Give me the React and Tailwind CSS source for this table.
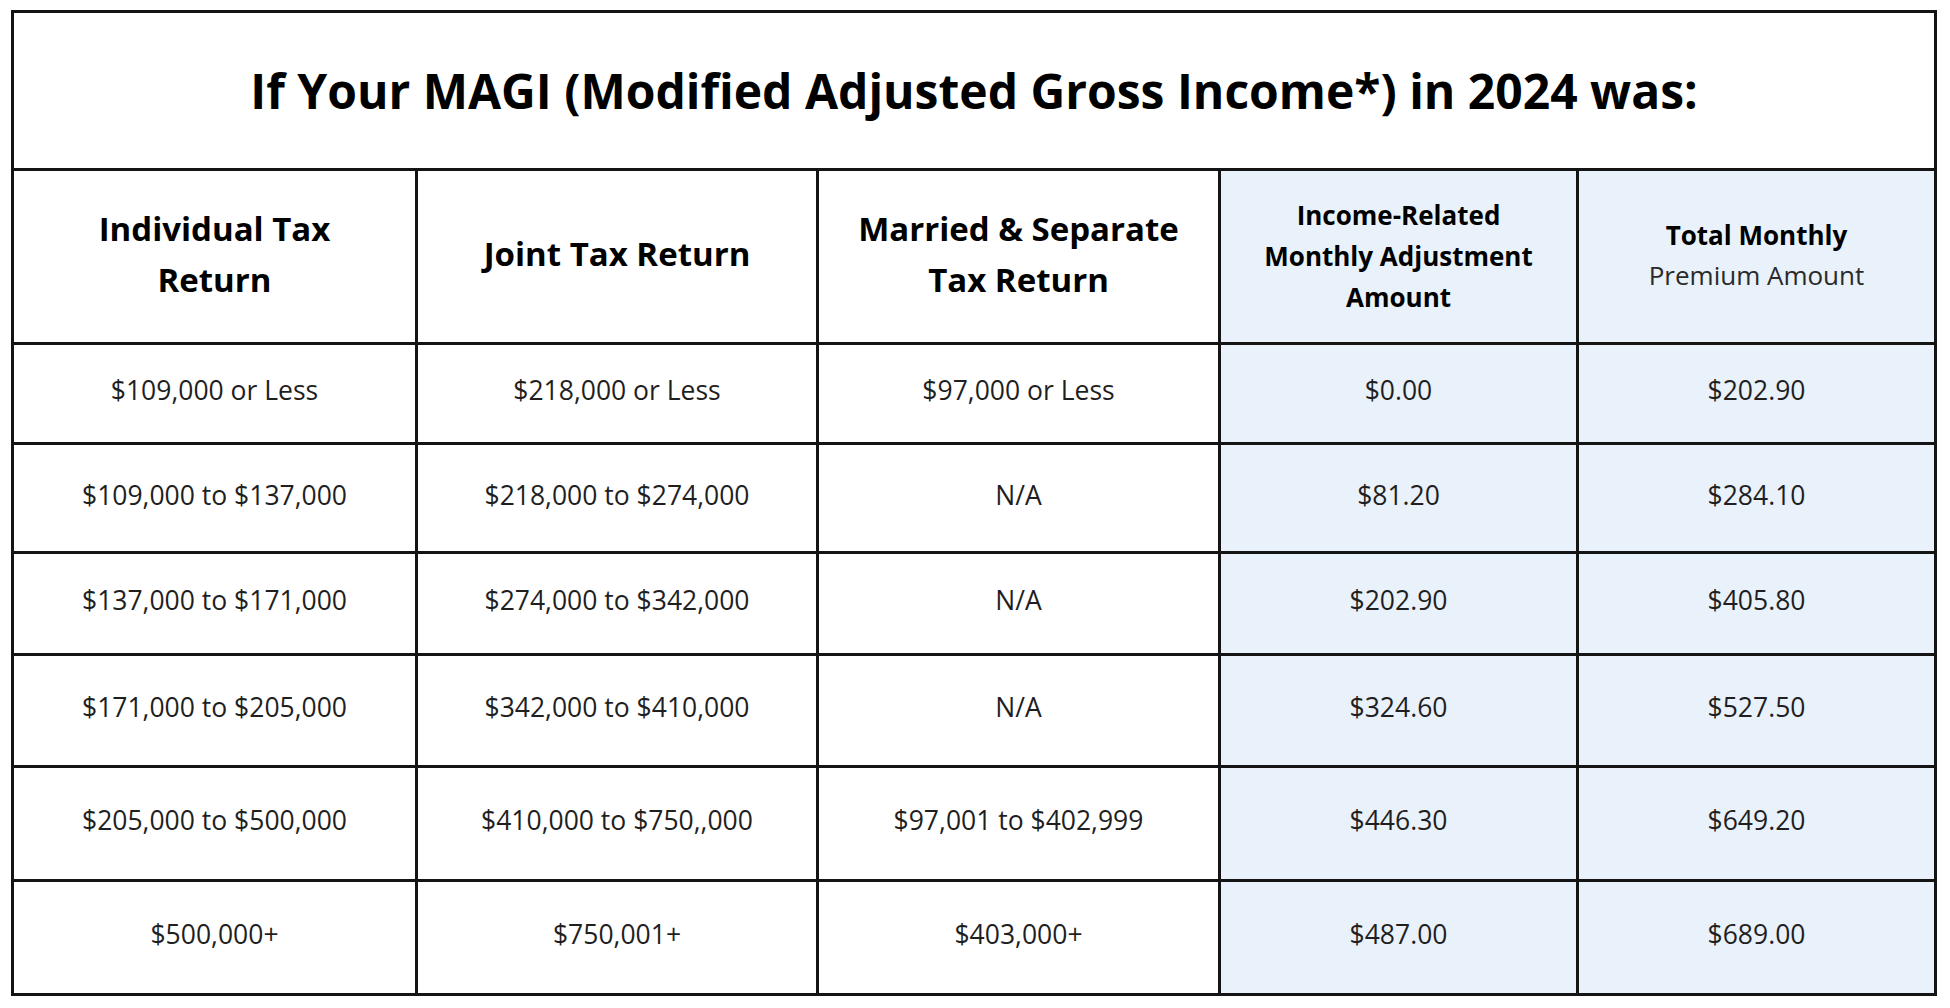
const headers = [
  { lines: ['Individual Tax', 'Return'] },
  { lines: ['Joint Tax Return'] },
  { lines: ['Married & Separate', 'Tax Return'] },
];

const rows = [
  { h: 'h-[97px]', cells: ['$109,000 or Less', '$218,000 or Less', '$97,000 or Less', '$0.00', '$202.90'] },
  { h: 'h-[106px]', cells: ['$109,000 to $137,000', '$218,000 to $274,000', 'N/A', '$81.20', '$284.10'] },
  { h: 'h-[99px]', cells: ['$137,000 to $171,000', '$274,000 to $342,000', 'N/A', '$202.90', '$405.80'] },
  { h: 'h-[109px]', cells: ['$171,000 to $205,000', '$342,000 to $410,000', 'N/A', '$324.60', '$527.50'] },
  { h: 'h-[111px]', cells: ['$205,000 to $500,000', '$410,000 to $750,,000', '$97,001 to $402,999', '$446.30', '$649.20'] },
  { h: 'h-[111px]', cells: ['$500,000+', '$750,001+', '$403,000+', '$487.00', '$689.00'] },
];

const Cell = ({ blue, className = '', children }) => (
  <div
    className={`flex flex-col items-center justify-center text-center ${blue ? 'bg-[#e9f1fb]' : 'bg-white'} ${className}`}
  >
    {children}
  </div>
);

export default function App() {
  return (
    <div className="min-h-screen bg-white pl-[11px] pt-[10px] font-['Open_Sans',sans-serif] text-[#1f1f1f]">
      <div className="grid w-[1926px] grid-cols-[401px_398px_399px_355px_355px] gap-[3px] bg-[#141414] p-[3px]">
        <Cell className="col-span-5 h-[155px]">
          <h1 className="text-[48px] font-bold leading-none text-black">
            If Your MAGI (Modified Adjusted Gross Income*) in 2024 was:
          </h1>
        </Cell>

        {headers.map((hd, i) => (
          <Cell key={i} className="h-[171px] pb-[6px]">
            {hd.lines.map((line) => (
              <div key={line} className="text-[33px] font-bold leading-[51px] text-black">
                {line}
              </div>
            ))}
          </Cell>
        ))}
        <Cell blue className="h-[171px]">
          <div className="text-[26px] font-bold leading-[41px] text-black">Income-Related</div>
          <div className="text-[26px] font-bold leading-[41px] text-black">Monthly Adjustment</div>
          <div className="text-[26px] font-bold leading-[41px] text-black">Amount</div>
        </Cell>
        <Cell blue className="h-[171px] pb-[3px]">
          <div className="text-[26px] font-bold leading-[40px] text-black">Total Monthly</div>
          <div className="text-[26px] leading-[40px] text-[#2a2a2a]">Premium Amount</div>
        </Cell>

        {rows.map((row) =>
          row.cells.map((val, j) => (
            <Cell key={row.cells[0] + j} blue={j > 2} className={`${row.h} pb-[6px]`}>
              <span className="text-[26.5px] leading-none">{val}</span>
            </Cell>
          ))
        )}
      </div>
    </div>
  );
}
